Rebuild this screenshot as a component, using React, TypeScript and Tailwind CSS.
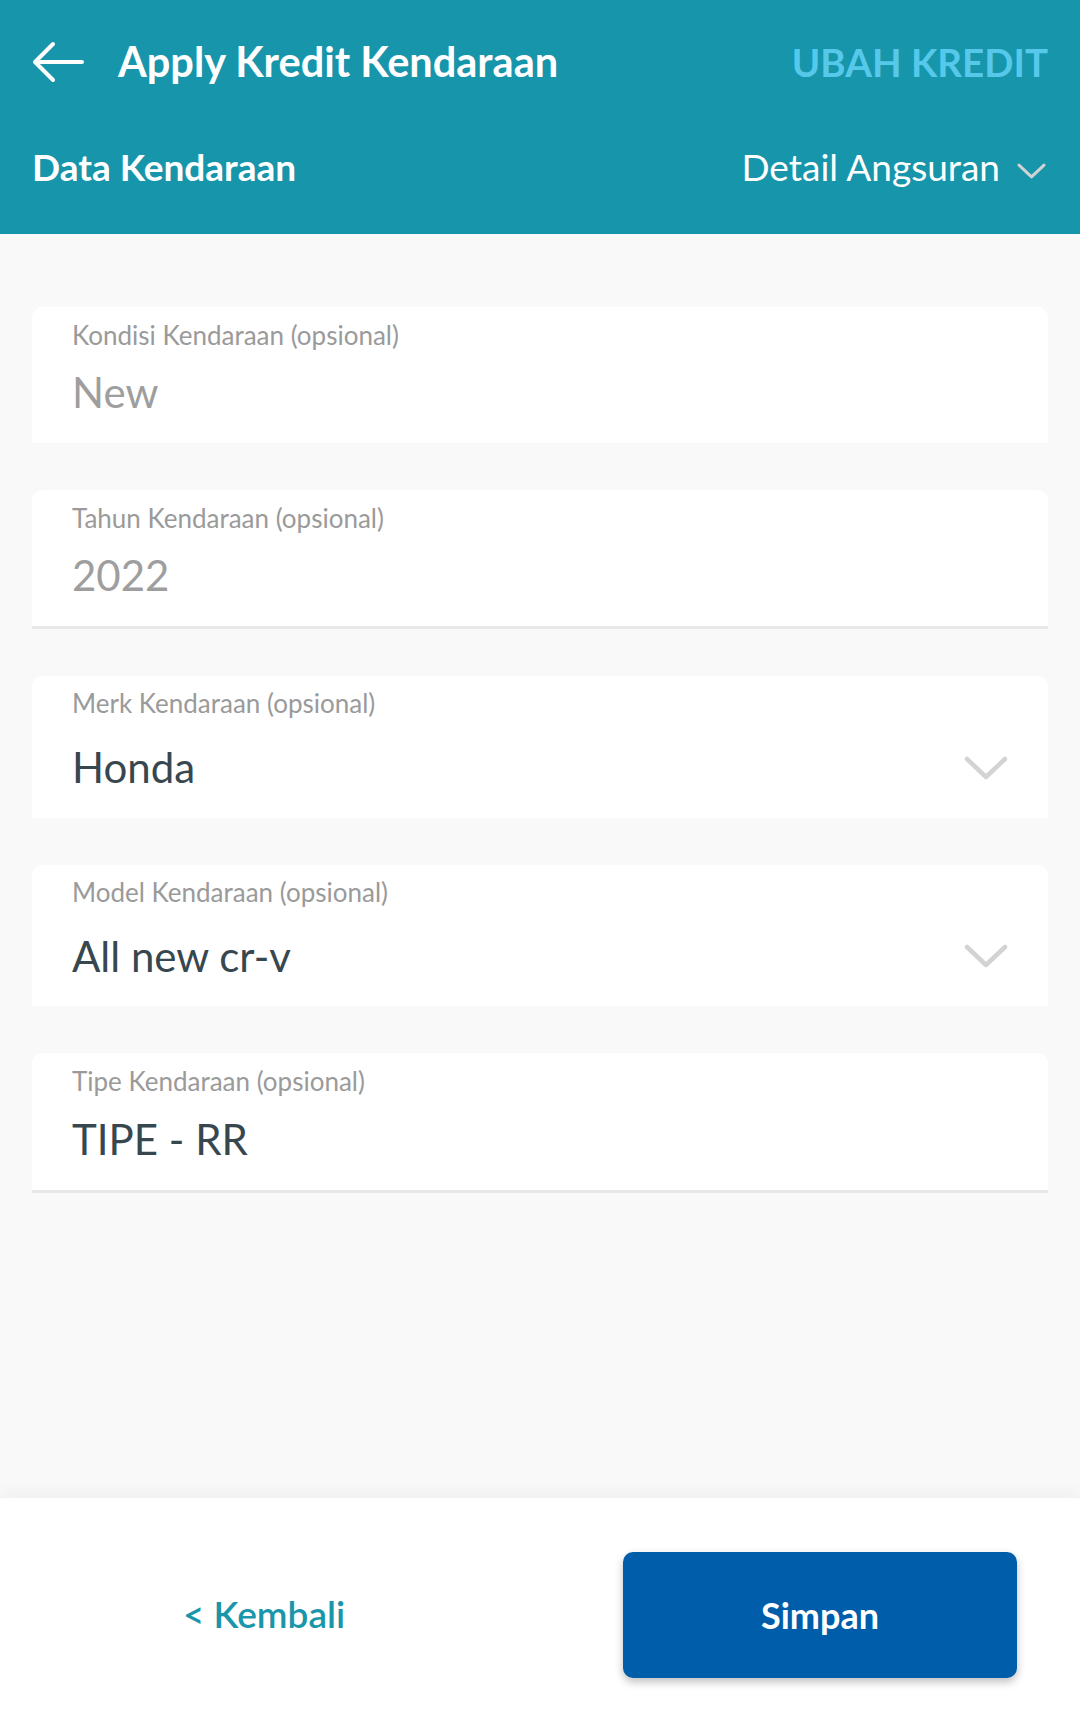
import React from 'react';

interface Field {
    label: string;
    value: string;
    disabled?: boolean;
    dropdown?: boolean;
    underline?: boolean;
}

const fields: Field[] = [
    { label: 'Kondisi Kendaraan (opsional)', value: 'New', disabled: true },
    { label: 'Tahun Kendaraan (opsional)', value: '2022', disabled: true, underline: true },
    { label: 'Merk Kendaraan (opsional)', value: 'Honda', dropdown: true },
    { label: 'Model Kendaraan (opsional)', value: 'All new cr-v', dropdown: true },
    { label: 'Tipe Kendaraan (opsional)', value: 'TIPE - RR', underline: true },
];

function Chevron({ className }: { className: string }) {
    return (
        <svg viewBox="0 0 44 24" fill="none" className={className}>
            <path d="M3 3 L22 21 L41 3" stroke="currentColor" strokeWidth="4.5" strokeLinecap="round" strokeLinejoin="round" />
        </svg>
    );
}

function FieldCard({ field }: { field: Field }) {
    return (
        <div
            className={
                field.underline
                    ? 'rounded-t-[10px] border-b-[3px] border-[#e8e8e8] bg-white pl-10 pr-10 pt-[13px] pb-[26px]'
                    : field.dropdown
                    ? 'rounded-t-[10px] bg-white pl-10 pr-10 pt-[12px] pb-[25px]'
                    : 'rounded-t-[10px] bg-white pl-10 pr-10 pt-[13px] pb-[25px]'
            }
        >
            <div className="text-[26px] leading-[1.2] text-[#9a9a9a]">{field.label}</div>
            <div className={field.dropdown ? 'mt-[23px] flex items-center justify-between' : 'mt-[16px] flex items-center justify-between'}>
                <span
                    className={
                        field.disabled
                            ? 'text-[42px] leading-[1.2] text-[#9e9e9e]'
                            : 'text-[42px] leading-[1.2] text-[#37474f]'
                    }
                >
                    {field.value}
                </span>
                {field.dropdown && <Chevron className="h-[24px] w-[44px] text-[#d3d3d3]" />}
            </div>
        </div>
    );
}

export default function App() {
    return (
        <div className="flex min-h-screen flex-col bg-[#f9f9fa] font-['Lato','Liberation_Sans',sans-serif]">
            {/* header */}
            <header className="h-[234px] bg-[#1795aa] text-white">
                <div className="flex h-[124px] items-center pl-8 pr-8">
                    <svg viewBox="0 0 52 42" fill="none" className="h-[42px] w-[52px]">
                        <path d="M50 21 H3 M21 3 L3 21 L21 39" stroke="white" strokeWidth="4" strokeLinecap="round" strokeLinejoin="round" />
                    </svg>
                    <h1 className="ml-[34px] text-[41.5px] font-bold leading-[1.2]">Apply Kredit Kendaraan</h1>
                    <button className="ml-auto text-[38.5px] font-bold leading-[1.2] text-[#56c8ea]">UBAH KREDIT</button>
                </div>
                <div className="flex h-[86px] items-center pl-8 pr-[34px]">
                    <span className="text-[37px] font-bold leading-[1.2]">Data Kendaraan</span>
                    <span className="ml-auto text-[37px] leading-[1.2]">Detail Angsuran</span>
                    <Chevron className="ml-[17px] mt-2 h-[16px] w-[29px] text-[#cfd3d4]" />
                </div>
            </header>

            {/* form */}
            <main className="flex flex-1 flex-col gap-[47px] px-8 pt-[73px]">
                {fields.map((f) => (
                    <FieldCard key={f.label} field={f} />
                ))}
            </main>

            {/* footer */}
            <footer className="grid h-[233px] grid-cols-2 items-center bg-white shadow-[0_-8px_14px_rgba(0,0,0,0.035)]">
                <button className="pr-3 text-center text-[37px] font-semibold leading-[1.2] text-[#1a96aa]">&lt; Kembali</button>
                <div className="flex justify-end pr-[63px]">
                    <button className="h-[126px] w-[394px] rounded-[10px] bg-[#005daa] text-[36px] font-bold text-white shadow-[0_4px_8px_rgba(0,0,0,0.25)]">
                        Simpan
                    </button>
                </div>
            </footer>
        </div>
    );
}
